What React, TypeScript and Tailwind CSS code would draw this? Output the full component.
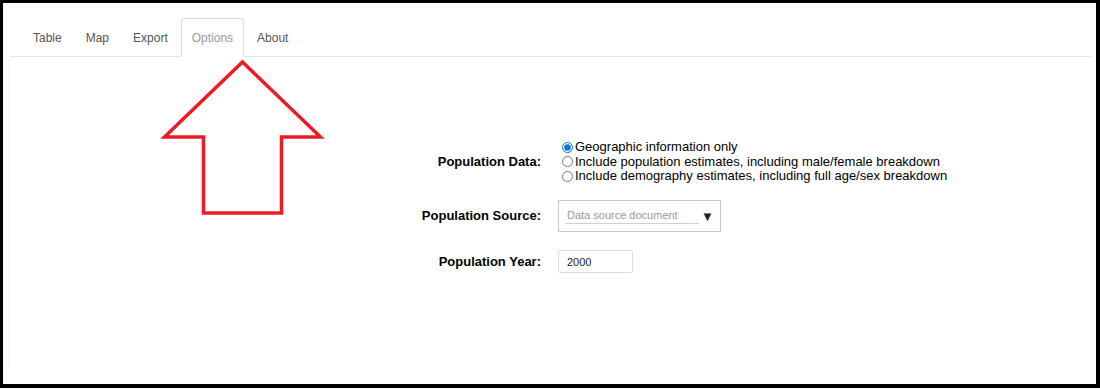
import React, { useState } from 'react';

const tabs = ['Table', 'Map', 'Export', 'Options', 'About'];

const dataChoices = [
  'Geographic information only',
  'Include population estimates, including male/female breakdown',
  'Include demography estimates, including full age/sex breakdown',
];

const UpArrow = () => (
  <svg className="pointer-events-none absolute left-0 top-0" width="1100" height="389" viewBox="0 0 1100 389">
    <polygon
      points="242.5,62 320.5,137 281.5,137 281.5,213 203.5,213 203.5,137 164.5,137"
      fill="none"
      stroke="#ed1c24"
      strokeWidth="3.5"
      strokeLinejoin="miter"
    />
  </svg>
);

export default function App() {
  const [activeTab, setActiveTab] = useState('Options');
  const [popData, setPopData] = useState(0);
  const [year, setYear] = useState('2000');

  return (
    <div className="relative h-[389px] w-[1100px] bg-white font-['Liberation_Sans',Arial,sans-serif]">
      <div className="h-[388px] border-t-[3px] border-r-[4px] border-b-[4px] border-l-[3px] border-black bg-white px-[5px] pt-[15px]">
        {/* tab bar */}
        <div className="flex pl-[14px]">
          {tabs.map((tab) => (
            <button
              key={tab}
              type="button"
              onClick={() => setActiveTab(tab)}
              className={
                activeTab === tab
                  ? 'relative z-10 mr-[2px] mb-[-1px] rounded-t-[4px] border border-[#dedede] border-b-white bg-white px-[10px] pt-[12px] pb-[10px] text-[12px] leading-[15px] text-[#999]'
                  : 'mr-[2px] mb-[-1px] rounded-t-[4px] border border-transparent px-[10px] pt-[12px] pb-[10px] text-[12px] leading-[15px] text-[#555]'
              }
            >
              {tab}
            </button>
          ))}
        </div>

        {/* panel */}
        <div className="h-[311px] rounded-tl-[4px] border-t border-l border-t-[#e6e6e6] border-l-[#f5f5f5] pt-[83px]">
          <div className="ml-[392px] grid grid-cols-[140px_auto] gap-x-[17px] text-[13px] text-black">
            <div className="flex h-[44px] items-center justify-end font-bold">Population Data:</div>
            <div className="flex flex-col">
              {dataChoices.map((choice, i) => (
                <label key={choice} className="flex h-[14.5px] items-center leading-[14.5px]">
                  <input
                    type="radio"
                    name="popdata"
                    checked={popData === i}
                    onChange={() => setPopData(i)}
                    className="m-0 ml-[4px] mr-[2px] h-[11px] w-[11px] accent-[#0b72d9]"
                  />
                  <span>{choice}</span>
                </label>
              ))}
            </div>

            <div className="mt-[16px] flex h-[32px] items-center justify-end font-bold">Population Source:</div>
            <div className="mt-[16px] flex h-[32px] w-[163px] items-center border border-[#c8c8c8] pl-[6px]">
              <div className="w-[134px] border-b border-[#d0d0d0] pt-[1px] pb-[1px] pl-[2px] text-[11px] leading-[13px] text-[#999]">
                Data source document
              </div>
              <span className="ml-[2px] text-[13px] leading-[13px] text-[#222]">▼</span>
            </div>

            <div className="mt-[18px] flex h-[23px] items-center justify-end font-bold">Population Year:</div>
            <div className="mt-[18px]">
              <input
                value={year}
                onChange={(e) => setYear(e.target.value)}
                className="h-[23px] w-[75px] rounded-[2px] border border-[#dcdcdc] px-[8px] text-[11px] text-[#222] outline-none"
              />
            </div>
          </div>
        </div>
      </div>
      <UpArrow />
    </div>
  );
}
